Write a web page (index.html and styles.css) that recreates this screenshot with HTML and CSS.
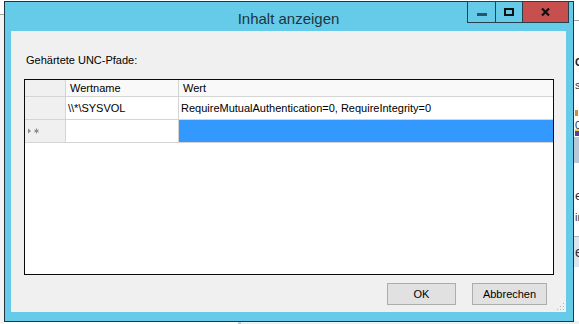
FILE: index.html
```html
<!DOCTYPE html>
<html lang="de">
<head>
  <meta charset="UTF-8" />
  <title>Inhalt anzeigen</title>
  <link rel="stylesheet" href="styles.css">
</head>
<body>
  <div class="desk">
    <div class="bg-left"></div>
    <div class="bg-right">
      <span class="bg-c">C</span>
      <span class="bg-s">s</span>
      <span class="bg-o"></span>
      <span class="bg-zero">0</span>
      <span class="bg-mark"></span>
      <span class="bg-band1"></span>
      <span class="bg-e">e</span>
      <span class="bg-in">in</span>
      <span class="bg-band2">e</span>
    </div>
    <div class="bg-bottom"></div>

    <div class="window">
      <div class="titlebar">Inhalt anzeigen</div>
      <div class="caption-btns">
        <div class="cap cap-min">
          <svg width="10" height="3" viewBox="0 0 10 3"><rect width="10" height="3" fill="#2a5566"/></svg>
        </div>
        <div class="cap cap-max">
          <svg width="10" height="8" viewBox="0 0 10 8"><rect x="1" y="1" width="8" height="6" fill="none" stroke="#111" stroke-width="2"/></svg>
        </div>
        <div class="cap cap-close">
          <svg width="9" height="8" viewBox="0 0 9 8"><path d="M1 0.5 L8 7.5 M8 0.5 L1 7.5" stroke="#111" stroke-width="2.2"/></svg>
        </div>
      </div>

      <div class="client">
        <div class="label">Gehärtete UNC-Pfade:</div>
        <div class="grid">
          <div class="rows">
            <div class="rh"></div>
            <div class="ch">Wertname</div>
            <div class="ch">Wert</div>

            <div class="rh"></div>
            <div class="cell">\\*\SYSVOL</div>
            <div class="cell">RequireMutualAuthentication=0, RequireIntegrity=0</div>

            <div class="rh new-row">
              <svg width="12" height="6" viewBox="0 0 12 6">
                <path d="M0 0.5 L3 3 L0 5.5 Z" fill="#8a8a8a"/>
                <path d="M8.5 0.5 V5.5 M6.3 1.8 L10.7 4.2 M6.3 4.2 L10.7 1.8" stroke="#8a8a8a" stroke-width="1"/>
              </svg>
            </div>
            <div class="cell"></div>
            <div class="cell sel"></div>
          </div>
        </div>
        <div class="actions">
          <button class="btn btn-ok">OK</button>
          <button class="btn btn-cancel">Abbrechen</button>
        </div>
        <svg class="grip" width="9" height="9" viewBox="0 0 9 9">
          <rect x="7" y="1" width="1" height="1" fill="#b5b5b5"/>
          <rect x="4" y="4" width="1" height="1" fill="#b5b5b5"/>
          <rect x="7" y="4" width="1" height="1" fill="#b5b5b5"/>
          <rect x="1" y="7" width="1" height="1" fill="#b5b5b5"/>
          <rect x="4" y="7" width="1" height="1" fill="#b5b5b5"/>
          <rect x="7" y="7" width="1" height="1" fill="#b5b5b5"/>
        </svg>
      </div>
    </div>
  </div>
</body>
</html>
```

FILE: styles.css
```css
body {
  margin: 0;
  background: #ffffff;
  font-family: "Liberation Sans", Arial, sans-serif;
  font-size: 11px;
  color: #000;
}
.desk {
  position: relative;
  width: 579px;
  height: 324px;
  overflow: hidden;
  background: #ffffff;
}

/* desktop behind the dialog */
.bg-left {
  position: absolute;
  left: 0;
  top: 14px;
  width: 4px;
  height: 310px;
  border-top: 1px solid #a8a8a8;
  background: #f4f4f4;
}
.bg-right {
  position: absolute;
  left: 574px;
  top: 0;
  width: 5px;
  height: 324px;
  background: #fff;
  border-top: 20px solid #fff;
  box-sizing: border-box;
}
.bg-right::before {
  content: "";
  position: absolute;
  left: 0;
  top: 0;
  width: 5px;
  height: 1px;
  background: #a0a0a0;
}
.bg-right span {
  position: absolute;
  left: 1px;
  line-height: 10px;
  font-size: 11px;
}
.bg-c { top: 37px; font-weight: bold; color: #222; }
.bg-s { top: 60px; color: #333; }
.bg-o { top: 90px; width: 3px; height: 6px; background: #d08a3a; }
.bg-zero { top: 100px; color: #333; }
.bg-mark { top: 109px; width: 5px; height: 5px; background: #5a3fa0; border-top: 2px solid #e8d860; }
.bg-band1 { top: 117px; left: 0 !important; width: 5px; height: 26px; background: #b8c8d8; }
.bg-e { top: 171px; color: #2d2d2d; font-size: 13px !important; }
.bg-in { top: 192px; color: #333; }
.bg-band2 {
  top: 216px;
  left: 0 !important;
  width: 5px;
  height: 30px;
  line-height: 30px !important;
  padding-left: 1px;
  background: #dde6ee;
  border-top: 1px solid #b0b8c0;
  font-size: 14px !important;
  color: #333;
}
.bg-bottom {
  position: absolute;
  left: 238px;
  top: 321px;
  width: 341px;
  height: 3px;
  background: #eef1f4;
  border-left: 3px solid #c4ccd4;
}

/* the dialog window */
.window {
  position: absolute;
  left: 4px;
  top: 1px;
  width: 570px;
  height: 321px;
  box-sizing: border-box;
  border: 1px solid #1f3544;
  background: #65cbe9;
  padding: 0 7px 9px 6px;
  display: flex;
  flex-direction: column;
}
.titlebar {
  height: 29px;
  box-sizing: border-box;
  padding-top: 4px;
  line-height: 25px;
  text-align: center;
  font-size: 15px;
  color: #1e3442;
}
.caption-btns {
  position: absolute;
  top: -1px;
  right: 4px;
  display: flex;
  height: 22px;
  box-sizing: border-box;
  border: 1px solid #27404f;
}
.cap {
  display: flex;
  align-items: center;
  justify-content: center;
  height: 20px;
}
.cap-min {
  width: 27px;
  padding-top: 4px;
  box-sizing: border-box;
}
.cap-max {
  width: 26px;
  border-left: 1px solid #27404f;
}
.cap-close {
  width: 45px;
  border-left: 1px solid #27404f;
  background: #c7504f;
}

.client {
  position: relative;
  flex: 1;
  background: #f0f0f0;
  display: flex;
  flex-direction: column;
}
.label {
  margin: 23px 0 0 15px;
  line-height: 13px;
}
.grid {
  margin: 12px 0 0 13px;
  width: 530px;
  height: 196px;
  box-sizing: border-box;
  border: 1px solid #0a0a0a;
  background: #ffffff;
}
.rows {
  display: grid;
  grid-template-columns: 40px 112px 374px;
  grid-template-rows: 16px 22px 22px;
  gap: 1px;
  padding-bottom: 1px;
  background: #d4d4d4;
}
.rh {
  background: #f0f0f0;
}
.ch {
  background: #f9f9f9;
  line-height: 16px;
  padding-left: 4px;
}
.cell {
  background: #ffffff;
  line-height: 22px;
  padding-left: 2px;
  white-space: nowrap;
}
.cell.sel {
  background: #3399ff;
}
.new-row {
  display: flex;
  align-items: center;
  padding-left: 3px;
}

.actions {
  display: flex;
  justify-content: flex-end;
  gap: 16px;
  margin-top: 8px;
  padding-right: 19px;
}
.btn {
  height: 22px;
  box-sizing: border-box;
  border: 1px solid #adadad;
  background: #e1e1e1;
  font-family: "Liberation Sans", Arial, sans-serif;
  font-size: 11px;
  color: #000;
  padding: 0;
}
.btn-ok {
  width: 69px;
}
.btn-cancel {
  width: 75px;
}
.grip {
  position: absolute;
  right: 1px;
  bottom: 1px;
}
```
